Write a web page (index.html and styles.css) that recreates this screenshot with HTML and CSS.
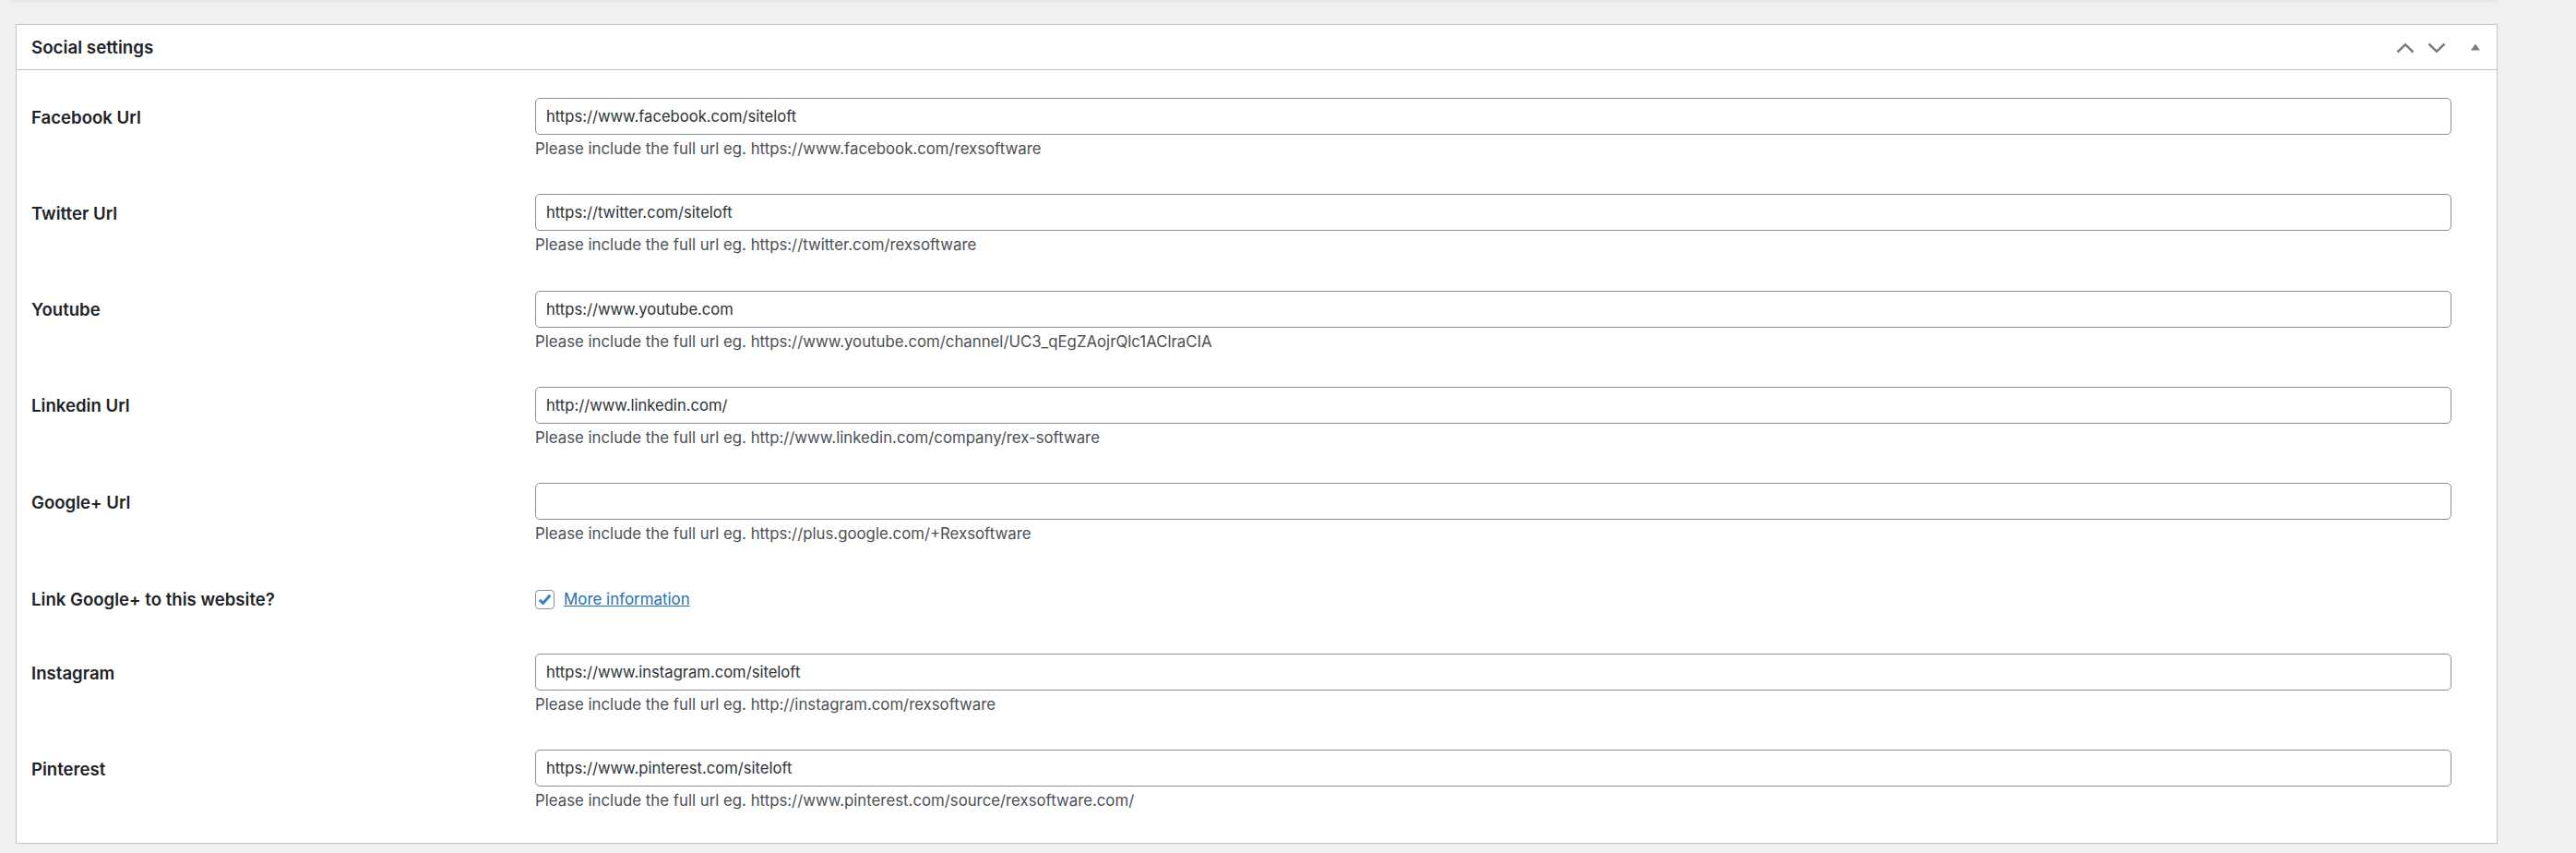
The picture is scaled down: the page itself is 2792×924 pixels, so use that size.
FILE: index.html
```html
<!DOCTYPE html>
<html lang="en">
<head>
<meta charset="utf-8">
<title>Social settings</title>
<link rel="stylesheet" href="styles.css">
</head>
<body>
<div class="page">
  <div class="prev-edge"></div>
  <div class="postbox">
    <div class="postbox-header">
      <h2 class="postbox-title">Social settings</h2>
      <div class="handle-actions">
        <button class="handle-btn up" type="button" aria-label="Move up">
          <svg width="20" height="12" viewBox="0 0 20 12"><path d="M1.5 10.5 L10 2.2 L18.5 10.5" fill="none" stroke="#787c82" stroke-width="2.5"/></svg>
        </button>
        <button class="handle-btn down" type="button" aria-label="Move down">
          <svg width="20" height="12" viewBox="0 0 20 12"><path d="M1.5 1.5 L10 9.8 L18.5 1.5" fill="none" stroke="#787c82" stroke-width="2.5"/></svg>
        </button>
        <button class="handle-btn toggle" type="button" aria-label="Toggle panel">
          <svg width="12" height="8" viewBox="0 0 12 8"><path d="M1 7.5 L6 0.5 L11 7.5 Z" fill="#787c82"/></svg>
        </button>
      </div>
    </div>
    <div class="inside">
      <div class="field-row">
        <div class="field-label">Facebook Url</div>
        <div class="field-control">
          <input class="text-input" type="text" value="https://www.facebook.com/siteloft">
          <p class="description">Please include the full url eg. https://www.facebook.com/rexsoftware</p>
        </div>
      </div>
      <div class="field-row">
        <div class="field-label">Twitter Url</div>
        <div class="field-control">
          <input class="text-input" type="text" value="https://twitter.com/siteloft">
          <p class="description">Please include the full url eg. https://twitter.com/rexsoftware</p>
        </div>
      </div>
      <div class="field-row">
        <div class="field-label">Youtube</div>
        <div class="field-control">
          <input class="text-input" type="text" value="https://www.youtube.com">
          <p class="description">Please include the full url eg. https://www.youtube.com/channel/UC3_qEgZAojrQlc1AClraCIA</p>
        </div>
      </div>
      <div class="field-row">
        <div class="field-label">Linkedin Url</div>
        <div class="field-control">
          <input class="text-input" type="text" value="http://www.linkedin.com/">
          <p class="description">Please include the full url eg. http://www.linkedin.com/company/rex-software</p>
        </div>
      </div>
      <div class="field-row">
        <div class="field-label">Google+ Url</div>
        <div class="field-control">
          <input class="text-input" type="text" value="">
          <p class="description">Please include the full url eg. https://plus.google.com/+Rexsoftware</p>
        </div>
      </div>
      <div class="check-row">
        <div class="field-label check-label">Link Google+ to this website?</div>
        <div class="check-control">
          <span class="checkbox">
            <svg width="15" height="13" viewBox="0 0 15 13"><path d="M1.8 6.8 L5.6 10.4 L13.2 1.8" fill="none" stroke="#3582c4" stroke-width="3" stroke-linejoin="round"/></svg>
          </span>
          <a class="more-link" href="#">More information</a>
        </div>
      </div>
      <div class="field-row">
        <div class="field-label">Instagram</div>
        <div class="field-control">
          <input class="text-input" type="text" value="https://www.instagram.com/siteloft">
          <p class="description">Please include the full url eg. http://instagram.com/rexsoftware</p>
        </div>
      </div>
      <div class="field-row">
        <div class="field-label">Pinterest</div>
        <div class="field-control">
          <input class="text-input" type="text" value="https://www.pinterest.com/siteloft">
          <p class="description">Please include the full url eg. https://www.pinterest.com/source/rexsoftware.com/</p>
        </div>
      </div>
    </div>
  </div>
</div>
</body>
</html>
```
FILE: styles.css
```css
* { box-sizing: border-box; }
html, body { margin: 0; padding: 0; }
body {
  background: #f0f0f1;
  font-family: Inter, "Noto Sans", "Liberation Sans", sans-serif;
  color: #1d2327;
}
.page {
  width: 2707px;
  padding: 0 0 10px 17px;
}
.prev-edge {
  height: 3px;
  margin-left: -4px;
  background: #e9e9ea;
  margin-bottom: 23px;
}
.postbox {
  background: #fff;
  border: 1px solid #c3c4c7;
}
.postbox-header {
  height: 49px;
  border-bottom: 1px solid #c3c4c7;
  display: flex;
  align-items: center;
  justify-content: space-between;
  padding: 0 17px 0 16px;
}
.postbox-title {
  margin: 0;
  font-size: 18.75px;
  font-weight: 600;
  color: #1d2327;
}
.handle-actions {
  display: flex;
  align-items: center;
}
.handle-btn {
  border: 0;
  background: none;
  padding: 0;
  height: 24px;
  display: flex;
  align-items: center;
  justify-content: center;
}
.handle-btn.up { width: 20px; margin-top: 2px; }
.handle-btn.down { width: 20px; margin-left: 14px; margin-top: 2px; }
.handle-btn.toggle {
  width: 12px;
  margin-left: 26px;
  margin-top: -1px;
}
.inside {
  padding: 0 49px 26px 16px;
}
.field-row {
  display: flex;
  height: 104.33px;
}
.field-label {
  width: 546px;
  flex: none;
  padding-top: 38.5px;
  font-size: 18.6px;
  line-height: 24px;
  font-weight: 600;
  color: #1d2327;
}
.field-control {
  flex: 1;
  padding-top: 30px;
}
.text-input {
  display: block;
  width: 100%;
  height: 40px;
  border: 1px solid #8c8f94;
  border-radius: 5px;
  padding: 0 11px;
  font-family: inherit;
  font-size: 16.6px;
  color: #2c3338;
  background: #fff;
}
.description {
  margin: 3px 0 0;
  font-size: 16.8px;
  line-height: 24px;
  color: #4a5056;
}
.check-row {
  display: flex;
  height: 80.5px;
  align-items: flex-start;
}
.check-label {
  padding-top: 39px;
}
.check-control {
  display: flex;
  align-items: center;
  gap: 10px;
  padding-top: 41px;
}
.checkbox {
  width: 21px;
  height: 21px;
  border: 1px solid #8c8f94;
  border-radius: 4px;
  display: flex;
  align-items: center;
  justify-content: center;
}
.more-link {
  color: #2271b1;
  font-size: 16.9px;
  line-height: 21px;
  text-decoration: underline;
}
```
